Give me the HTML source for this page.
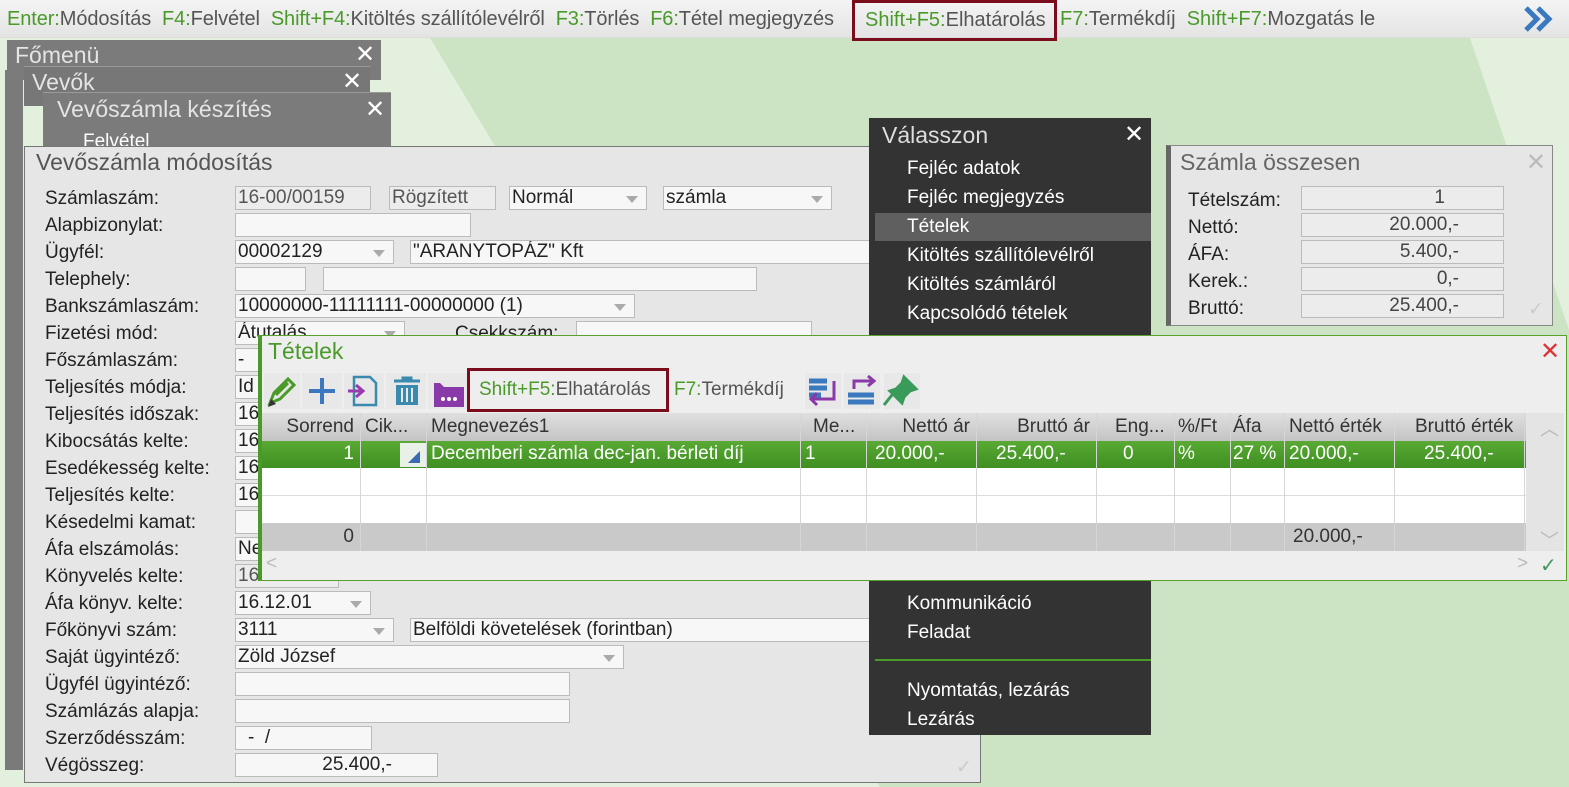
<!DOCTYPE html>
<html><head><meta charset="utf-8"><style>
*{box-sizing:border-box;margin:0;padding:0}
body{width:1569px;height:787px;overflow:hidden;position:relative;font-family:"Liberation Sans",sans-serif;font-size:19px;color:#222;background:#e4f0de}
.a{position:absolute;white-space:nowrap}
.g{color:#4a9a2a}
.lab{position:absolute;left:45px;line-height:22px}
.in{position:absolute;height:24px;background:#f7f7f7;border:1px solid #bbb;line-height:22px;padding-left:2px;white-space:nowrap;overflow:hidden}
.ro{background:#ececec;color:#555}
.dd::after{content:"";position:absolute;right:8px;top:9px;border:6px solid transparent;border-top:7px solid #aaa;border-bottom:0}
.mi{position:absolute;left:907px;color:#fff;line-height:22px}
.col{position:absolute;top:0;bottom:0;border-left:1px solid #d6d6d6}
.t{position:absolute;line-height:26px;white-space:nowrap}
</style></head><body>
<svg class="a" style="left:0;top:0" width="1569" height="787"><polygon points="430,38 1470,38 1569,330 1569,787 880,787" fill="#cde4c4"/></svg>
<!-- top bar -->
<div class="a" style="left:0;top:0;width:1569px;height:38px;background:linear-gradient(#f4f4f4,#e4e4e4);border-bottom:1px solid #ddd"></div>
<div class="a" style="left:7px;top:8px;line-height:22px;color:#555;font-size:20px;letter-spacing:-0.1px"><span class="g">Enter:</span>Módosítás&nbsp; <span class="g">F4:</span>Felvétel&nbsp; <span class="g">Shift+F4:</span>Kitöltés szállítólevélről&nbsp; <span class="g">F3:</span>Törlés&nbsp; <span class="g">F6:</span>Tétel megjegyzés</div>
<div class="a" style="left:852px;top:0;width:205px;height:41px;border:3px solid #7a0c1c;line-height:35px;padding-left:10px;color:#555;font-size:20px"><span class="g">Shift+F5:</span>Elhatárolás</div>
<div class="a" style="left:1060px;top:8px;line-height:22px;color:#555;font-size:20px"><span class="g">F7:</span>Termékdíj&nbsp; <span class="g">Shift+F7:</span>Mozgatás le</div>
<svg class="a" style="left:1522px;top:4px" width="36" height="30"><path d="M4 4l11 11-11 11M16 4l11 11-11 11" stroke="#3a78c0" stroke-width="5" fill="none"/></svg>
<!-- left strip -->
<div class="a" style="left:5px;top:70px;width:18px;height:700px;background:#7a7a7a"></div>
<!-- stacked windows -->
<div class="a" style="left:7px;top:40px;width:374px;height:40px;background:#7b7b7b"><span class="a" style="left:8px;top:2px;font-size:23px;color:#e4e4e4">Főmenü</span><span class="a" style="left:348px;top:0;font-size:24px;color:#fff">✕</span></div>
<div class="a" style="left:24px;top:66px;width:346px;height:40px;background:#777;border-top:1px solid #999"><span class="a" style="left:8px;top:2px;font-size:23px;color:#e4e4e4">Vevők</span><span class="a" style="left:318px;top:0;font-size:24px;color:#fff">✕</span></div>
<div class="a" style="left:43px;top:92px;width:348px;height:60px;background:#7b7b7b;border-top:1px solid #999"><span class="a" style="left:14px;top:3px;font-size:23px;color:#e4e4e4">Vevőszámla készítés</span><span class="a" style="left:322px;top:2px;font-size:24px;color:#fff">✕</span><span class="a" style="left:40px;top:38px;color:#fff">Felvétel</span></div>
<!-- main form -->
<div class="a" style="left:24px;top:146px;width:957px;height:637px;background:#e6e6e6;border:1px solid #777"></div>
<div class="a" style="left:36px;top:149px;font-size:23px;color:#555">Vevőszámla módosítás</div>
<div class="lab" style="top:188px">Számlaszám:</div>
<div class="in ro" style="left:235px;top:186px;width:136px">16-00/00159</div>
<div class="in ro" style="left:389px;top:186px;width:107px">Rögzített</div>
<div class="in dd" style="left:509px;top:186px;width:138px">Normál</div>
<div class="in dd" style="left:663px;top:186px;width:169px">számla</div>
<div class="lab" style="top:215px">Alapbizonylat:</div><div class="in" style="left:235px;top:213px;width:236px"></div>
<div class="lab" style="top:242px">Ügyfél:</div><div class="in dd" style="left:235px;top:240px;width:159px">00002129</div>
<div class="in" style="left:410px;top:240px;width:470px">"ARANYTOPÁZ" Kft</div>
<div class="lab" style="top:269px">Telephely:</div><div class="in" style="left:235px;top:267px;width:71px"></div><div class="in" style="left:323px;top:267px;width:434px"></div>
<div class="lab" style="top:296px">Bankszámlaszám:</div><div class="in dd" style="left:235px;top:294px;width:400px">10000000-11111111-00000000 (1)</div>
<div class="lab" style="top:323px">Fizetési mód:</div><div class="in dd" style="left:235px;top:321px;width:170px">Átutalás</div><span class="a" style="left:455px;top:323px">Csekkszám:</span><div class="in" style="left:576px;top:321px;width:236px"></div>
<div class="lab" style="top:350px">Főszámlaszám:</div>
<div class="lab" style="top:377px">Teljesítés módja:</div>
<div class="lab" style="top:404px">Teljesítés időszak:</div>
<div class="lab" style="top:431px">Kibocsátás kelte:</div>
<div class="lab" style="top:458px">Esedékesség kelte:</div>
<div class="lab" style="top:485px">Teljesítés kelte:</div>
<div class="lab" style="top:512px">Késedelmi kamat:</div>
<div class="lab" style="top:539px">Áfa elszámolás:</div>
<div class="in" style="left:235px;top:348px;width:30px">-</div>
<div class="in" style="left:235px;top:375px;width:30px">Id</div>
<div class="in" style="left:235px;top:402px;width:30px">16</div>
<div class="in" style="left:235px;top:429px;width:30px">16</div>
<div class="in" style="left:235px;top:456px;width:30px">16</div>
<div class="in" style="left:235px;top:483px;width:30px">16</div>
<div class="in" style="left:235px;top:510px;width:30px"></div>
<div class="in" style="left:235px;top:537px;width:30px">Ne</div>
<div class="lab" style="top:566px">Könyvelés kelte:</div><div class="in ro" style="left:235px;top:564px;width:104px">16.12.01</div>
<div class="lab" style="top:593px">Áfa könyv. kelte:</div><div class="in dd" style="left:235px;top:591px;width:136px">16.12.01</div>
<div class="lab" style="top:620px">Főkönyvi szám:</div><div class="in dd" style="left:235px;top:618px;width:159px">3111</div><div class="in" style="left:410px;top:618px;width:470px">Belföldi követelések (forintban)</div>
<div class="lab" style="top:647px">Saját ügyintéző:</div><div class="in dd" style="left:235px;top:645px;width:389px">Zöld József</div>
<div class="lab" style="top:674px">Ügyfél ügyintéző:</div><div class="in" style="left:235px;top:672px;width:335px"></div>
<div class="lab" style="top:701px">Számlázás alapja:</div><div class="in" style="left:235px;top:699px;width:335px"></div>
<div class="lab" style="top:728px">Szerződésszám:</div><div class="in" style="left:235px;top:726px;width:137px;padding-left:12px">- &nbsp;/</div>
<div class="lab" style="top:755px">Végösszeg:</div><div class="in" style="left:235px;top:753px;width:203px;text-align:right;padding-right:45px">25.400,-</div>
<span class="a" style="left:956px;top:756px;color:#ccc">✓</span>
<!-- Valasszon menu -->
<div class="a" style="left:869px;top:118px;width:282px;height:617px;background:#333"></div>
<div class="a" style="left:882px;top:122px;font-size:23px;color:#ddd">Válasszon</div>
<span class="a" style="left:1124px;top:120px;font-size:24px;color:#fff">✕</span>
<div class="a" style="left:875px;top:213px;width:276px;height:28px;background:#5f5f5f"></div>
<div class="mi" style="top:158px">Fejléc adatok</div>
<div class="mi" style="top:187px">Fejléc megjegyzés</div>
<div class="mi" style="top:216px">Tételek</div>
<div class="mi" style="top:245px">Kitöltés szállítólevélről</div>
<div class="mi" style="top:274px">Kitöltés számláról</div>
<div class="mi" style="top:303px">Kapcsolódó tételek</div>
<div class="mi" style="top:593px">Kommunikáció</div>
<div class="mi" style="top:622px">Feladat</div>
<div class="a" style="left:875px;top:659px;width:276px;height:2px;background:#4a9a2a"></div>
<div class="mi" style="top:680px">Nyomtatás, lezárás</div>
<div class="mi" style="top:709px">Lezárás</div>
<!-- Szamla osszesen -->
<div class="a" style="left:1166px;top:145px;width:387px;height:181px;background:#e6e6e6;border:1px solid #888;border-left:5px solid #666"></div>
<div class="a" style="left:1180px;top:149px;font-size:23px;color:#666">Számla összesen</div>
<span class="a" style="left:1526px;top:148px;font-size:24px;color:#bbb">✕</span>
<div class="a" style="left:1188px;top:187px;line-height:27px">Tételszám:<br>Nettó:<br>ÁFA:<br>Kerek.:<br>Bruttó:</div>
<div class="in ro" style="left:1301px;top:186px;width:203px;text-align:right;padding-right:58px;color:#444">1</div>
<div class="in ro" style="left:1301px;top:213px;width:203px;text-align:right;padding-right:44px;color:#444">20.000,-</div>
<div class="in ro" style="left:1301px;top:240px;width:203px;text-align:right;padding-right:44px;color:#444">5.400,-</div>
<div class="in ro" style="left:1301px;top:267px;width:203px;text-align:right;padding-right:44px;color:#444">0,-</div>
<div class="in ro" style="left:1301px;top:294px;width:203px;text-align:right;padding-right:44px;color:#444">25.400,-</div>
<span class="a" style="left:1528px;top:298px;color:#ccc">✓</span>
<!-- Tetelek -->
<div class="a" style="left:258px;top:335px;width:1309px;height:246px;background:#eeeeee;border:1px solid #5aa02c;border-left:4px solid #4a9a2a"></div>
<div class="a g" style="left:268px;top:338px;font-size:23px;color:#4a9a2a">Tételek</div>
<span class="a" style="left:1540px;top:337px;font-size:24px;color:#d33">✕</span>
<!-- toolbar icons -->
<svg class="a" style="left:264px;top:373px" width="660" height="36">
<g fill="#e8e8e8"><rect x="0" y="0" width="36" height="36"/><rect x="38" y="0" width="40" height="36"/><rect x="80" y="0" width="40" height="36"/><rect x="122" y="0" width="40" height="36"/><rect x="164" y="0" width="40" height="36"/><rect x="541" y="0" width="36" height="36"/><rect x="580" y="0" width="36" height="36"/><rect x="620" y="0" width="36" height="36"/></g>
<path d="M6 30l4-10 14-14 6 6-14 14z M12 22l12-12" stroke="#4a9a2a" stroke-width="3" fill="none"/><path d="M4 34l3-8 5 5z" fill="#333"/>
<path d="M58 5v26M45 18h26" stroke="#3a78c0" stroke-width="4"/>
<path d="M90 4h16l6 6v22h-22z" fill="none" stroke="#3a8ab0" stroke-width="2.5"/><path d="M84 18h14M92 12l7 6-7 6" stroke="#9a3ab0" stroke-width="3" fill="none"/>
<path d="M130 8h26M139 8v-3h8v3" stroke="#3a8ab0" stroke-width="3" fill="none"/><rect x="132" y="12" width="22" height="20" fill="#3a8ab0"/><path d="M138 15v14M143 15v14M148 15v14" stroke="#e8e8e8" stroke-width="2"/>
<path d="M170 10h6l4 4h20v20h-30z" fill="#8a3aa8"/><circle cx="179" cy="26" r="2" fill="#fff"/><circle cx="185" cy="26" r="2" fill="#fff"/><circle cx="191" cy="26" r="2" fill="#fff"/>
<path d="M545 8h18M545 15h18M545 22h12" stroke="#3a78c0" stroke-width="5"/><path d="M570 8v18h-22M553 20l-6 6 6 6" stroke="#8a3aa8" stroke-width="3" fill="none"/>
<path d="M584 22h26M584 29h26" stroke="#3a78c0" stroke-width="5"/><path d="M590 16v-8h20M604 3l6 5-6 5" stroke="#8a3aa8" stroke-width="3" fill="none"/>
<path d="M640 4l12 12-6 2-6 6-2 6-12-12 6-2 6-6z M628 22l-8 10" fill="#3a9a5a" stroke="#3a9a5a" stroke-width="3"/>
</svg>
<div class="a" style="left:467px;top:368px;width:202px;height:44px;border:3px solid #7a0c1c;line-height:38px;padding-left:9px;color:#555"><span class="g">Shift+F5:</span>Elhatárolás</div>
<div class="a" style="left:674px;top:379px;line-height:22px;color:#555"><span class="g">F7:</span>Termékdíj</div>
<!-- grid -->
<div class="a" style="left:262px;top:413px;width:1264px;height:138px;background:#fff">
<div class="a" style="left:0;top:0;width:1264px;height:28px;background:linear-gradient(#e0e0e0,#c4c4c4)"></div>
<div class="a" style="left:0;top:28px;width:1264px;height:27px;background:linear-gradient(#5aaa34,#3f8f22)"></div>
<div class="a" style="left:0;top:82px;width:1264px;height:1px;background:#ddd"></div>
<div class="a" style="left:0;top:110px;width:1264px;height:28px;background:#c9c9c9"></div>
<div class="col" style="left:98px"></div><div class="col" style="left:164px"></div><div class="col" style="left:538px"></div><div class="col" style="left:604px"></div><div class="col" style="left:714px"></div><div class="col" style="left:834px"></div><div class="col" style="left:912px"></div><div class="col" style="left:968px"></div><div class="col" style="left:1022px"></div><div class="col" style="left:1132px"></div><div class="col" style="left:1262px"></div>
<div class="a" style="left:138px;top:30px;width:26px;height:24px;background:#e8f0e8"></div>
<svg class="a" style="left:146px;top:38px" width="14" height="12"><path d="M12 0v12h-12z" fill="#3a6ab0"/></svg>
</div>
<div class="a" style="left:262px;top:413px;width:1264px;height:138px;color:#333">
<span class="t" style="right:1172px;top:1px">Sorrend</span><span class="t" style="left:103px;top:1px">Cik...</span><span class="t" style="left:169px;top:1px">Megnevezés1</span><span class="t" style="left:551px;top:1px">Me...</span><span class="t" style="right:556px;top:1px">Nettó ár</span><span class="t" style="right:436px;top:1px">Bruttó ár</span><span class="t" style="left:853px;top:1px">Eng...</span><span class="t" style="left:916px;top:1px">%/Ft</span><span class="t" style="left:971px;top:1px">Áfa</span><span class="t" style="left:1027px;top:1px">Nettó érték</span><span class="t" style="left:1153px;top:1px">Bruttó érték</span>
<div style="color:#fff"><span class="t" style="right:1172px;top:28px">1</span><span class="t" style="left:169px;top:28px">Decemberi számla dec-jan. bérleti díj</span><span class="t" style="left:543px;top:28px">1</span><span class="t" style="left:613px;top:28px">20.000,-</span><span class="t" style="left:734px;top:28px">25.400,-</span><span class="t" style="left:861px;top:28px">0</span><span class="t" style="left:916px;top:28px">%</span><span class="t" style="left:971px;top:28px">27 %</span><span class="t" style="left:1027px;top:28px">20.000,-</span><span class="t" style="left:1162px;top:28px">25.400,-</span></div>
<span class="t" style="right:1172px;top:111px">0</span><span class="t" style="left:1031px;top:111px">20.000,-</span>
</div>
<div class="a" style="left:1526px;top:413px;width:38px;height:138px;background:#e4e4e4"></div>
<span class="a" style="left:1540px;top:414px;color:#bbb">︿</span><span class="a" style="left:1540px;top:526px;color:#bbb">﹀</span>
<span class="a" style="left:266px;top:553px;color:#bbb">&lt;</span><span class="a" style="left:1517px;top:553px;color:#bbb">&gt;</span><span class="a" style="left:1540px;top:553px;color:#3a9a5a;font-size:20px">✓</span>
</body></html>
